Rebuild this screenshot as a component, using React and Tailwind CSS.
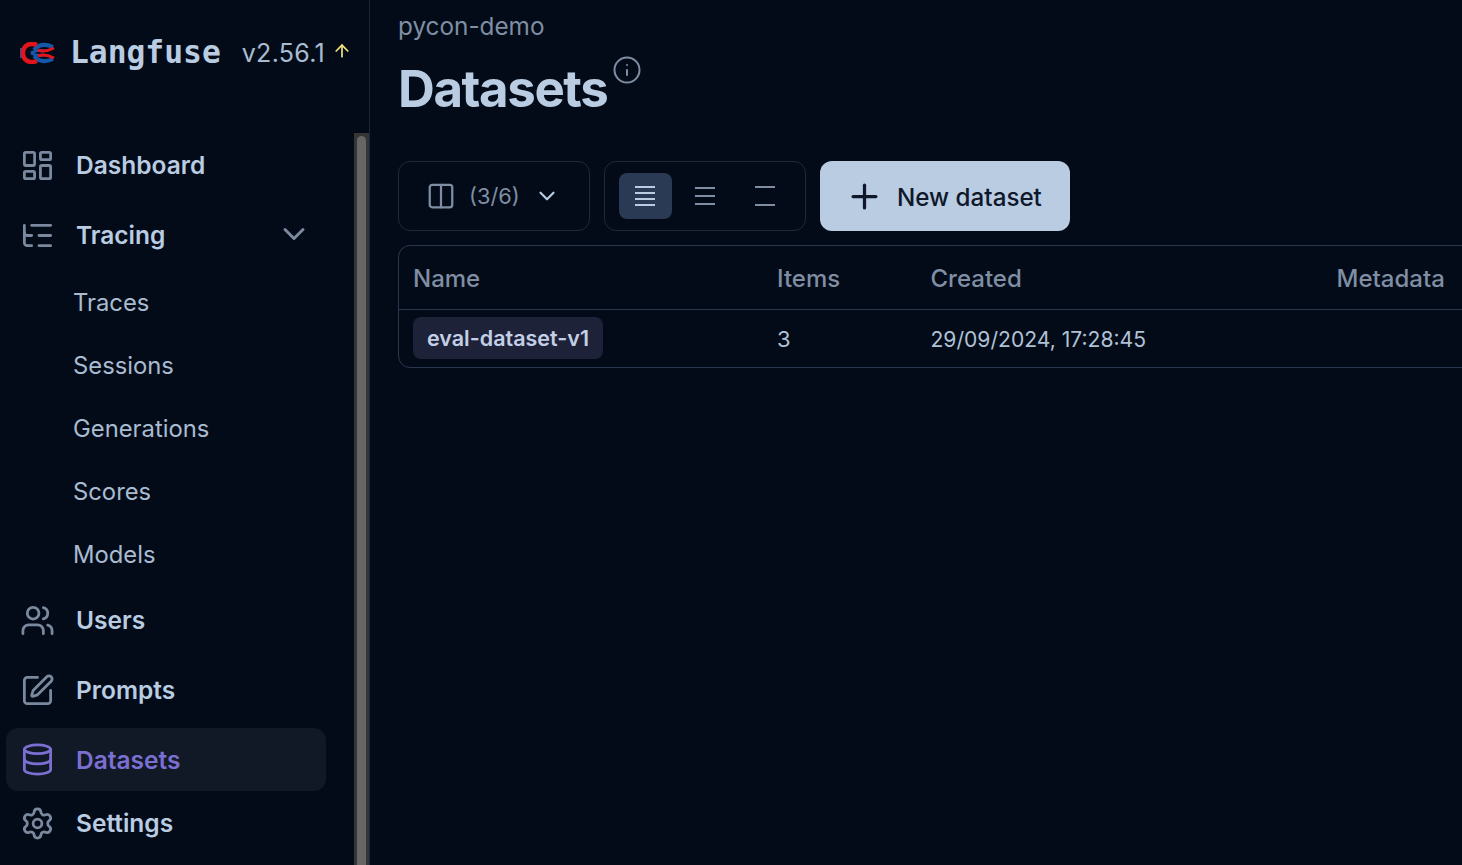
import React from 'react';
import { ArrowUp, ChevronDown, Columns2, Database, Info, LayoutDashboard, ListTree, Plus, Settings, SquarePen, Users } from 'lucide-react';

const subItems = ['Traces', 'Sessions', 'Generations', 'Scores', 'Models'];

function LangfuseLogo() {
    return (
        <svg width="36" height="22" viewBox="0 0 36 22" fill="none" className="mt-[9px] shrink-0">
            <path d="M1 6v10" stroke="#1557a8" strokeWidth="2" />
            <path d="M14 8C18 3 24 1 33 5M14 14c4 5 10 7 19 3" stroke="#1557a8" strokeWidth="4" />
            <path d="M11 11c5-3 9-3 13-2M11 11c5 3 9 3 13 2" stroke="#1557a8" strokeWidth="3" />
            <path d="M17 3C9 0 3 4 3 11s6 11 14 8" stroke="#e2141c" strokeWidth="4.5" />
            <path d="M18 8c5 2 10 1 16-2M18 14c5-2 10-1 16 2" stroke="#e2141c" strokeWidth="3" />
        </svg>
    );
}

function NavItem({ icon: Icon, label, active, className = '', children }) {
    return (
        <div className={`flex h-[63px] w-[320px] items-center rounded-xl pl-[14px] ${active ? 'bg-[#111826] text-[#7b6fd1]' : 'text-[#b9cce2]'} ${className}`}>
            <Icon size={35} strokeWidth={1.9} className={active ? 'text-[#7b6fd1]' : 'text-[#7a899e]'} />
            <span className={`ml-[21px] text-[24.5px] font-semibold ${active ? 'pt-[2px]' : ''}`}>{label}</span>
            {children}
        </div>
    );
}

function RowHeightIcon({ lines }) {
    return (
        <svg width="22" height="22" viewBox="0 0 22 22" stroke="currentColor" strokeWidth="2" fill="none">
            {lines.map((y) => (
                <path key={y} d={`M1 ${y}h20`} />
            ))}
        </svg>
    );
}

export default function App() {
    return (
        <div className="flex h-[865px] w-[1462px] overflow-hidden bg-[#030b18] font-['Inter',sans-serif] text-[#b9cce2]">
            <aside className="flex w-[370px] shrink-0 flex-col border-r border-[#1b2638]">
                <header className="flex h-[133px] shrink-0 items-start pl-[20px] pt-[33px]">
                    <LangfuseLogo />
                    <span className="ml-[14px] font-['DejaVu_Sans_Mono',monospace] text-[31.3px] leading-[38px] font-bold">Langfuse</span>
                    <span className="ml-[21px] text-[25px] leading-[40px] tracking-[0.012em] text-[#a9bbd0]">v2.56.1</span>
                    <ArrowUp size={20} strokeWidth={2} className="ml-[7px] mt-[8px] text-[#f6e77e]" />
                </header>

                <div className="flex min-h-0 flex-1">
                    <nav className="min-w-0 flex-1 pl-[6px] pt-px">
                        <NavItem icon={LayoutDashboard} label="Dashboard" />
                        <NavItem icon={ListTree} label="Tracing" className="mt-[7px]">
                            <ChevronDown size={36} strokeWidth={2} className="ml-auto mr-[14px] mt-[-4px] text-[#7a899e]" />
                        </NavItem>
                        <ul className="mt-[4px]">
                            {subItems.map((item) => (
                                <li key={item} className="flex h-[63px] items-center pl-[67px] text-[23.8px] font-normal text-[#a9bbd0]">
                                    {item}
                                </li>
                            ))}
                        </ul>
                        <NavItem icon={Users} label="Users" className="mt-[3px]" />
                        <NavItem icon={SquarePen} label="Prompts" className="mt-[7px]" />
                        <NavItem icon={Database} label="Datasets" active className="mt-[6px]" />
                        <NavItem icon={Settings} label="Settings" className="mt-px" />
                    </nav>
                    {/* scrollbar */}
                    <div className="flex w-[15px] shrink-0 justify-center bg-[#353535] pt-[3px]">
                        <div className="h-full w-[9px] rounded-t-full bg-[#666666]" />
                    </div>
                </div>
            </aside>

            <main className="min-w-0 flex-1 pl-[28px]">
                <div className="pt-[11px] text-[24.3px] leading-[30px] text-[#7f8ea3]">pycon-demo</div>
                <div className="mt-[13px] flex items-start">
                    <h1 className="text-[51px] leading-[70px] font-bold tracking-[-0.028em]">Datasets</h1>
                    <Info size={30} strokeWidth={1.6} className="ml-[5px] mt-px text-[#7f8ea3]" />
                </div>

                <div className="mt-[37px] flex gap-[14px]">
                    <div className="flex h-[70px] w-[192px] items-center rounded-xl border border-[#1e293b] pl-[27px] text-[#7f8ea3]">
                        <Columns2 size={30} strokeWidth={1.8} />
                        <span className="ml-[13px] text-[21.8px]">(3/6)</span>
                        <ChevronDown size={26} strokeWidth={2} className="ml-[14px] text-[#b9cce2]" />
                    </div>
                    <div className="flex h-[70px] w-[202px] items-center gap-[7px] rounded-xl border border-[#1e293b] px-[14px] text-[#7f8ea3]">
                        <div className="flex h-[46px] w-[53px] items-center justify-center rounded-lg bg-[#2a3a55] text-[#b9cce2]">
                            <RowHeightIcon lines={[2, 8, 14, 20]} />
                        </div>
                        <div className="flex h-[46px] w-[53px] items-center justify-center">
                            <RowHeightIcon lines={[3, 11, 19]} />
                        </div>
                        <div className="flex h-[46px] w-[53px] items-center justify-center">
                            <RowHeightIcon lines={[2, 20]} />
                        </div>
                    </div>
                    <button className="flex h-[70px] w-[250px] items-center rounded-xl bg-[#b9cce2] pl-[25px] text-[24.2px] font-medium text-[#0f172a]">
                        <Plus size={39} strokeWidth={2} />
                        <span className="ml-[13px] pt-[4px]">New dataset</span>
                    </button>
                </div>

                <div className="mt-[14px] w-[1100px] rounded-xl border border-[#2a384e] text-[24px]">
                    <div className="flex h-[64px] items-center border-b border-[#2a384e] pt-[3px] text-[#7f8ea3] font-medium">
                        <div className="w-[378px] pl-[14px]">Name</div>
                        <div className="w-[153.5px]">Items</div>
                        <div className="w-[406px]">Created</div>
                        <div>Metadata</div>
                    </div>
                    <div className="flex h-[57px] items-center">
                        <div className="mt-[-2px] w-[378px] pl-[14px]">
                            <span className="inline-block rounded-lg bg-[#1e2238] px-[14px] py-[5px] text-[21.5px] leading-[32px] font-semibold text-[#c3cfe6]">eval-dataset-v1</span>
                        </div>
                        <div className="w-[153.5px] pt-[2px] text-[22px] text-[#b0c1d6]">3</div>
                        <div className="w-[406px] pt-[2px] text-[21.1px] text-[#b0c1d6]">29/09/2024, 17:28:45</div>
                    </div>
                </div>
            </main>
        </div>
    );
}
